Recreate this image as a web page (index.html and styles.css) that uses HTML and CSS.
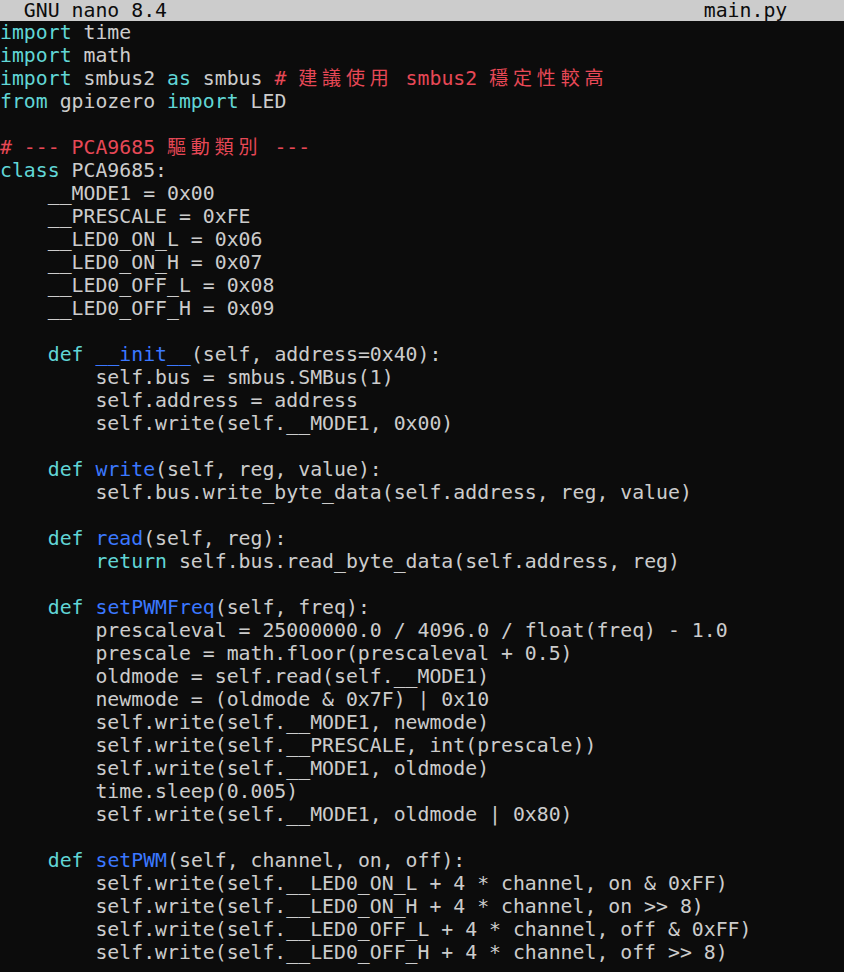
FILE: index.html
```html
<!DOCTYPE html>
<html lang="zh-Hant">
<head>
<meta charset="utf-8">
<title>GNU nano 8.4 - main.py</title>
<link rel="stylesheet" href="styles.css">
</head>
<body>
<div class="term">
<div class="titlebar">  GNU nano 8.4                                             main.py</div>
<div class="buf">
<div class="ln"><span class="k">import</span> time</div>
<div class="ln"><span class="k">import</span> math</div>
<div class="ln"><span class="k">import</span> smbus2 <span class="k">as</span> smbus <span class="c"># <span class="cjk">建議使用</span> smbus2 <span class="cjk">穩定性較高</span></span></div>
<div class="ln"><span class="k">from</span> gpiozero <span class="k">import</span> LED</div>
<div class="ln"></div>
<div class="ln"><span class="c"># --- PCA9685 <span class="cjk">驅動類別</span> ---</span></div>
<div class="ln"><span class="k">class</span> PCA9685:</div>
<div class="ln">    __MODE1 = 0x00</div>
<div class="ln">    __PRESCALE = 0xFE</div>
<div class="ln">    __LED0_ON_L = 0x06</div>
<div class="ln">    __LED0_ON_H = 0x07</div>
<div class="ln">    __LED0_OFF_L = 0x08</div>
<div class="ln">    __LED0_OFF_H = 0x09</div>
<div class="ln"></div>
<div class="ln">    <span class="k">def</span> <span class="f">__init__</span>(self, address=0x40):</div>
<div class="ln">        self.bus = smbus.SMBus(1)</div>
<div class="ln">        self.address = address</div>
<div class="ln">        self.write(self.__MODE1, 0x00)</div>
<div class="ln"></div>
<div class="ln">    <span class="k">def</span> <span class="f">write</span>(self, reg, value):</div>
<div class="ln">        self.bus.write_byte_data(self.address, reg, value)</div>
<div class="ln"></div>
<div class="ln">    <span class="k">def</span> <span class="f">read</span>(self, reg):</div>
<div class="ln">        <span class="k">return</span> self.bus.read_byte_data(self.address, reg)</div>
<div class="ln"></div>
<div class="ln">    <span class="k">def</span> <span class="f">setPWMFreq</span>(self, freq):</div>
<div class="ln">        prescaleval = 25000000.0 / 4096.0 / float(freq) - 1.0</div>
<div class="ln">        prescale = math.floor(prescaleval + 0.5)</div>
<div class="ln">        oldmode = self.read(self.__MODE1)</div>
<div class="ln">        newmode = (oldmode &amp; 0x7F) | 0x10</div>
<div class="ln">        self.write(self.__MODE1, newmode)</div>
<div class="ln">        self.write(self.__PRESCALE, int(prescale))</div>
<div class="ln">        self.write(self.__MODE1, oldmode)</div>
<div class="ln">        time.sleep(0.005)</div>
<div class="ln">        self.write(self.__MODE1, oldmode | 0x80)</div>
<div class="ln"></div>
<div class="ln">    <span class="k">def</span> <span class="f">setPWM</span>(self, channel, on, off):</div>
<div class="ln">        self.write(self.__LED0_ON_L + 4 * channel, on &amp; 0xFF)</div>
<div class="ln">        self.write(self.__LED0_ON_H + 4 * channel, on &gt;&gt; 8)</div>
<div class="ln">        self.write(self.__LED0_OFF_L + 4 * channel, off &amp; 0xFF)</div>
<div class="ln">        self.write(self.__LED0_OFF_H + 4 * channel, off &gt;&gt; 8)</div>
</div>
</div>
</body>
</html>
```
FILE: styles.css
```css
:root {
  --cw: 11.93px;
}
html, body {
  margin: 0;
  padding: 0;
  background: #0c0c0c;
}
.term {
  width: 844px;
  height: 972px;
  overflow: hidden;
  background: #0c0c0c;
  color: #cccccc;
  font-family: "DejaVu Sans Mono", "Noto Sans CJK TC", monospace;
  font-size: 19.82px;
}
.titlebar {
  height: 21px;
  line-height: 21px;
  background: #cccccc;
  color: #0c0c0c;
  white-space: pre;
}
.buf {
  display: flex;
  flex-direction: column;
}
.ln {
  height: 23px;
  line-height: 23px;
  white-space: pre;
}
.k { color: #61d6d6; }
.f { color: #3b78ff; }
.c { color: #e74856; }
.cjk {
  font-family: "Noto Sans CJK TC", "Noto Sans CJK SC", sans-serif;
  font-size: 19px;
  line-height: 0;
  letter-spacing: calc(2 * var(--cw) - 1em);
}
```
